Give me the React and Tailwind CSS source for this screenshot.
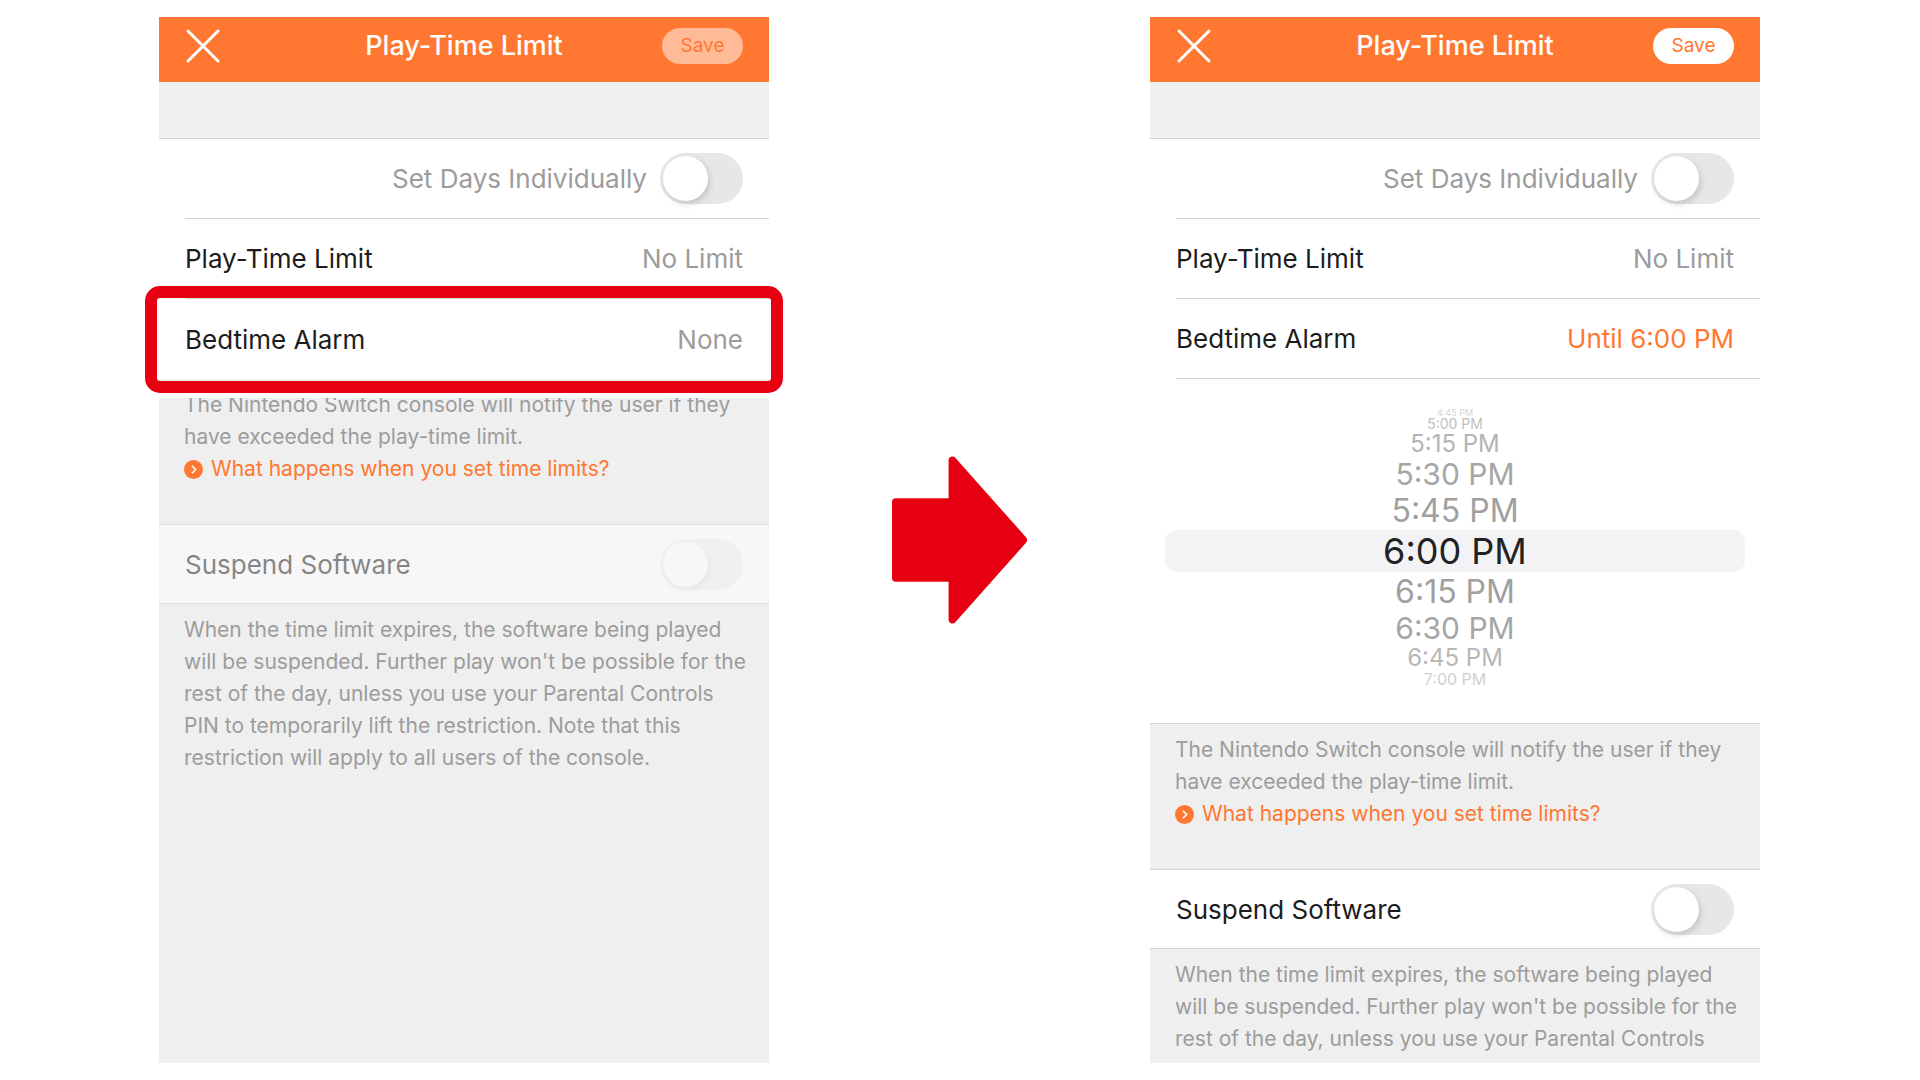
import React, { useState } from 'react';

const TIMES = [
    { label: '4:45 PM', className: 'h-[10px] text-[9px] text-[#d6d6d6]' },
    { label: '5:00 PM', className: 'h-[14px] text-[14px] text-[#c0c0c0]' },
    { label: '5:15 PM', className: 'h-[26px] text-[24px] text-[#b4b4b4]' },
    { label: '5:30 PM', className: 'h-[34px] text-[30px] text-[#a6a6a6]' },
    { label: '5:45 PM', className: 'h-[39px] text-[32px] text-[#a0a0a0]' },
    { label: '6:00 PM', className: 'h-[42px] text-[36px] text-[#222222] bg-[#f3f3f5]', selected: true },
    { label: '6:15 PM', className: 'h-[39px] text-[32px] text-[#a0a0a0]' },
    { label: '6:30 PM', className: 'h-[34px] text-[30px] text-[#a6a6a6]' },
    { label: '6:45 PM', className: 'h-[25px] text-[24px] text-[#b8b8b8]' },
    { label: '7:00 PM', className: 'h-[18px] text-[16px] text-[#d0d0d0]' },
];

// --- SWITCH ---
const Switch = ({ id, disabled }) => {
    const [on, setOn] = useState(false);

    return (
        <input
            id={id}
            type="checkbox"
            role="switch"
            checked={on}
            disabled={disabled}
            onChange={(e) => setOn(e.target.checked)}
            className="flex h-[51px] w-[83px] shrink-0 appearance-none items-center rounded-full bg-[#e7e7e9] px-[3px] before:block before:size-[45px] before:rounded-full before:bg-white before:shadow-[2px_3px_6px_rgba(0,0,0,0.15)] before:content-[''] checked:justify-end checked:bg-[#ff7730] disabled:opacity-50"
        />
    );
};

// --- HEADER ---
const Header = ({ canSave }) => (
    <header className="grid h-[65px] grid-cols-[1fr_auto_1fr] items-center bg-[#ff7730] px-[26px] pb-[7px]">
        <button type="button" aria-label="Close" className="justify-self-start">
            <svg viewBox="0 0 36 36" className="size-9" fill="none" stroke="white" strokeWidth="3" strokeLinecap="round">
                <path d="M3 3 L33 33 M33 3 L3 33" />
            </svg>
        </button>
        <h1 className="text-[27px] font-medium text-white">Play-Time Limit</h1>
        <button
            type="button"
            disabled={!canSave}
            className="h-9 w-[81px] justify-self-end rounded-full bg-white text-[19px] text-[#ff7730] disabled:bg-[#ffbb98]"
        >
            Save
        </button>
    </header>
);

const Row = ({ label, value, last, active }) => (
    <div className="bg-white pl-[26px]">
        <button
            type="button"
            className={`flex h-20 w-full items-center justify-between pr-[26px] text-[26px] ${last ? '' : 'border-b border-[#d4d4d4]'}`}
        >
            <span className="text-[#1c1c1c]">{label}</span>
            <span className={active ? 'text-[#ff7730]' : 'text-[#9c9c9c]'}>{value}</span>
        </button>
    </div>
);

const NotifyNote = () => (
    <div className="h-[145px] pt-[10px] pr-4 pl-[25px] text-[21px] leading-8 text-[#9c9c9c]">
        <p>
            The Nintendo Switch console will notify the user if they
            <br />
            have exceeded the play-time limit.
        </p>
        <a href="#time-limits" className="flex items-center gap-2 text-[#ff7730]">
            <svg viewBox="0 0 18 18" className="size-[19px]" fill="none">
                <circle cx="9" cy="9" r="9" fill="#ff7730" />
                <path d="M7.5 5.5 L11 9 L7.5 12.5" stroke="white" strokeWidth="1.5" />
            </svg>
            What happens when you set time limits?
        </a>
    </div>
);

// --- TIME PICKER ---
const TimePicker = () => (
    <div role="listbox" aria-label="Bedtime alarm" className="flex h-[345px] flex-col border-b border-[#d4d4d4] bg-white px-[15px] pt-7">
        {TIMES.map(({ label, className, selected }) => (
            <button
                key={label}
                type="button"
                role="option"
                aria-selected={Boolean(selected)}
                className={`flex w-full shrink-0 items-center justify-center rounded-xl leading-none ${className}`}
            >
                {label}
            </button>
        ))}
    </div>
);

const Panel = ({ id, canSave, bedtime, highlighted, open, suspendDisabled, suspendLines }) => (
    <section className="flex min-w-0 flex-1 flex-col bg-[#efefef]">
        <Header canSave={canSave} />
        <div className="h-[57px] border-b border-[#d4d4d4]" />

        <div className="bg-white pl-[26px]">
            <div className="flex h-20 items-center justify-end gap-[13px] border-b border-[#d4d4d4] pr-[26px]">
                <label htmlFor={`${id}-days`} className="text-[26px] text-[#9c9c9c]">Set Days Individually</label>
                <Switch id={`${id}-days`} />
            </div>
        </div>

        <Row label="Play-Time Limit" value="No Limit" />
        <div className="relative">
            <Row label="Bedtime Alarm" value={bedtime} active={open} last={highlighted} />
            {highlighted && (
                <div className="pointer-events-none absolute -inset-x-[14px] -top-[13px] h-[107px] rounded-[15px] border-[12px] border-[#e60012] shadow-[0_0_0_5px_white]" />
            )}
        </div>

        {open && <TimePicker />}
        <NotifyNote />

        <div className={`flex h-20 items-center justify-between border-y border-[#d4d4d4] bg-white px-[26px] ${suspendDisabled ? 'opacity-50' : ''}`}>
            <label htmlFor={`${id}-suspend`} className="text-[26px] text-[#1c1c1c]">Suspend Software</label>
            <Switch id={`${id}-suspend`} disabled={suspendDisabled} />
        </div>
        <p className="pt-[10px] pr-4 pl-[25px] text-[21px] leading-8 text-[#9c9c9c]">
            {suspendLines.map((line) => (
                <span key={line} className="block">{line}</span>
            ))}
        </p>
    </section>
);

const SUSPEND_LINES = [
    'When the time limit expires, the software being played',
    "will be suspended. Further play won't be possible for the",
    'rest of the day, unless you use your Parental Controls',
    'PIN to temporarily lift the restriction. Note that this',
    'restriction will apply to all users of the console.',
];

const App = () => {
    return (
        <main className="flex min-h-screen gap-[123px] bg-white py-[17px] pr-40 pl-[159px] font-['Inter',sans-serif]">
            <Panel id="before" bedtime="None" highlighted suspendDisabled suspendLines={SUSPEND_LINES} />

            <svg viewBox="0 0 136 168" className="h-[168px] w-[135px] shrink-0 self-center" fill="#e60012" stroke="#e60012" strokeWidth="8" strokeLinejoin="round">
                <path d="M4 46 H61 V4 L132 84 L61 164 V122 H4 Z" />
            </svg>

            <Panel id="after" canSave bedtime="Until 6:00 PM" open suspendLines={SUSPEND_LINES.slice(0, 3)} />
        </main>
    );
};

export default App;
